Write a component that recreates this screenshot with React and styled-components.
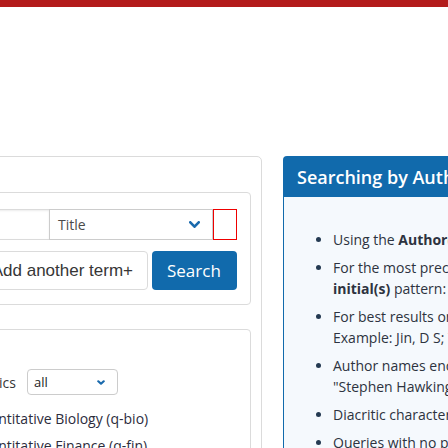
import React from 'react';
import styled, { createGlobalStyle } from 'styled-components';

const GlobalStyle = createGlobalStyle`
  html, body {
    margin: 0;
    padding: 0;
    background: #fff;
    overflow: hidden;
  }
  body {
    width: 448px;
    height: 448px;
    font-family: "Open Sans", "DejaVu Sans", sans-serif;
    color: #363636;
  }
`;

const TopBar = styled.div`
  height: 7px;
  background: #b31b1b;
`;

const Main = styled.div`
  display: flex;
  align-items: flex-start;
  gap: 21px;
  margin-left: -70px;
  padding-top: 149px;
`;

const OuterBox = styled.div`
  box-sizing: border-box;
  width: 332px;
  height: 420px;
  flex-shrink: 0;
  border: 1px solid #dbdbdb;
  border-radius: 5px;
  padding: 35px 10px 0;
`;

const InnerBox = styled.div`
  border: 1px solid #dbdbdb;
  border-radius: 4px;
  padding: ${p => (p.$tall ? '39px 13px 40px' : '16px 13px 14px')};
  margin-top: ${p => (p.$tall ? '24px' : '0')};
`;

const TermRow = styled.div`
  display: flex;
  height: 31px;
`;

const TermInput = styled.div`
  box-sizing: border-box;
  width: 94px;
  border: 1px solid #dbdbdb;
  border-right: none;
  box-shadow: inset 0 1px 2px rgba(10, 10, 10, 0.08);
`;

const FieldSelect = styled.div`
  box-sizing: border-box;
  width: 164px;
  display: flex;
  align-items: center;
  justify-content: space-between;
  padding: 0 12px 0 8px;
  border: 1px solid #cccccc;
  font-size: 14px;
  color: #4a4a4a;
`;

const ErrorCell = styled.div`
  box-sizing: border-box;
  width: 24px;
  border: 1px solid #ee0000;
`;

const ButtonRow = styled.div`
  display: flex;
  justify-content: flex-end;
  gap: 4px;
  margin-top: 11px;
`;

const AddButton = styled.button`
  height: 39px;
  padding: 0 14px;
  background: #fff;
  border: 1px solid #dbdbdb;
  border-radius: 4px;
  font-family: "Liberation Sans", Arial, sans-serif;
  font-size: 17px;
  color: #363636;
  white-space: nowrap;
`;

const SearchButton = styled.button`
  height: 39px;
  width: 85px;
  padding: 0 0 0 15px;
  text-align: left;
  background: #116aac;
  border: none;
  border-radius: 4px;
  font-family: "Open Sans", sans-serif;
  font-size: 17px;
  color: #fff;
  white-space: nowrap;
  overflow: hidden;
`;

const SubjectRow = styled.div`
  display: flex;
  align-items: center;
  gap: 11px;
`;

const SubjectLabel = styled.span`
  width: 61px;
  text-align: right;
  font-size: 14px;
  color: #363636;
`;

const SmallSelect = styled.div`
  box-sizing: border-box;
  width: 91px;
  height: 26px;
  display: flex;
  align-items: center;
  justify-content: space-between;
  padding: 0 12px 0 6px;
  border: 1px solid #cccccc;
  border-radius: 4px;
  font-size: 13px;
  color: #222;
`;

const CheckList = styled.div`
  margin-top: 10px;
`;

const CheckItem = styled.label`
  display: flex;
  align-items: center;
  gap: 3px;
  height: 27px;
  font-size: 14px;
  color: #2c2c3c;
  white-space: nowrap;
`;

const CheckBox = styled.span`
  width: 13px;
  height: 13px;
  box-sizing: border-box;
  border: 1px solid #767676;
  border-radius: 2px;
  flex-shrink: 0;
`;

const HelpPanel = styled.div`
  width: 560px;
  flex-shrink: 0;
`;

const HelpHeader = styled.div`
  height: 41px;
  display: flex;
  align-items: center;
  padding-left: 14px;
  background: #116aac;
  border-radius: 4px 0 0 0;
  color: #fff;
  font-size: 18px;
  font-weight: 600;
  white-space: nowrap;
`;

const HelpBody = styled.div`
  height: 300px;
  background: #f5f9fd;
  border-left: 1px solid #116aac;
  padding-top: 32px;
`;

const HelpList = styled.ul`
  margin: 0;
  padding-left: 49px;
  list-style: disc;
`;

const HelpItem = styled.li`
  font-size: 14px;
  line-height: 21px;
  margin-bottom: 7px;
  color: #2d3340;
  white-space: nowrap;
  &::marker {
    color: #243a52;
  }
`;

const Chevron = ({ w = 11, h = 7, sw = 2.6 }) => (
  <svg width={w} height={h} viewBox={`0 0 ${w} ${h}`}>
    <path
      d={`M1.3 1.3 L${w / 2} ${h - 1.3} L${w - 1.3} 1.3`}
      fill="none"
      stroke="#1a6aad"
      strokeWidth={sw}
      strokeLinecap="round"
      strokeLinejoin="round"
    />
  </svg>
);

export default function App() {
  return (
    <>
      <GlobalStyle />
      <TopBar />
      <Main>
        <OuterBox>
          <InnerBox>
            <TermRow>
              <TermInput />
              <FieldSelect>
                <span>Title</span>
                <Chevron />
              </FieldSelect>
              <ErrorCell />
            </TermRow>
            <ButtonRow>
              <AddButton>Add another term+</AddButton>
              <SearchButton>Search</SearchButton>
            </ButtonRow>
          </InnerBox>
          <InnerBox $tall>
            <SubjectRow>
              <SubjectLabel>Physics</SubjectLabel>
              <SmallSelect>
                <span>all</span>
                <Chevron w={8} h={5} sw={2.2} />
              </SmallSelect>
            </SubjectRow>
            <CheckList>
              <CheckItem><CheckBox />Quantitative Biology (q-bio)</CheckItem>
              <CheckItem><CheckBox />Quantitative Finance (q-fin)</CheckItem>
            </CheckList>
          </InnerBox>
        </OuterBox>
        <HelpPanel>
          <HelpHeader>Searching by Author Name</HelpHeader>
          <HelpBody>
            <HelpList>
              <HelpItem>Using the <b>Author(s) field</b> produces best results for author name searches.</HelpItem>
              <HelpItem>
                For the most precise name search, follow <b>surname(s), forename(s)</b> or <b>surname(s),</b>
                <br />
                <b>initial(s)</b> pattern: example Hawking, S or Hawking, Stephen
              </HelpItem>
              <HelpItem>
                For best results on multiple author names, <b>separate individuals with a ;</b> (semicolon).
                <br />
                Example: Jin, D S; Ye, J
              </HelpItem>
              <HelpItem>
                Author names enclosed in quotes will return only <b>exact matches</b>. For example,
                <br />
                "Stephen Hawking" will not return matches for Stephen W. Hawking.
              </HelpItem>
              <HelpItem>Diacritic character variants are automatically searched in the Author(s) field.</HelpItem>
              <HelpItem>Queries with no punctuation will treat each term independently.</HelpItem>
            </HelpList>
          </HelpBody>
        </HelpPanel>
      </Main>
    </>
  );
}
